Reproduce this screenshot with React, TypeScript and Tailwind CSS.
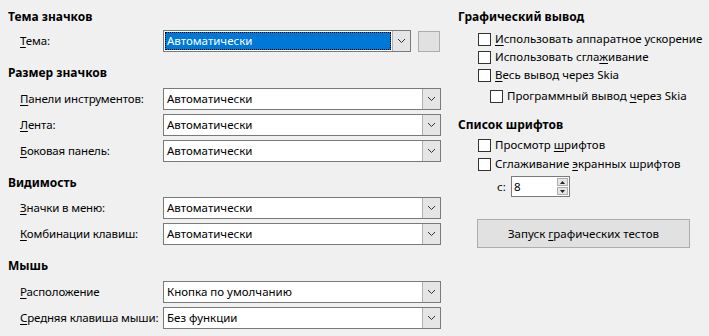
import React from 'react';

const font = { fontFamily: '"Noto Sans", "Open Sans", sans-serif' };

function U({ children }: { children: React.ReactNode }) {
  return <span className="underline underline-offset-2">{children}</span>;
}

function Chevron() {
  return (
    <svg width="9" height="6" viewBox="0 0 9 6" className="text-[#333]">
      <path d="M1 1l3.5 3.5L8 1" fill="none" stroke="currentColor" strokeWidth="1" />
    </svg>
  );
}

function Select({ value, focused }: { value: string; focused?: boolean }) {
  return (
    <div
      className={`flex shrink-0 h-[22px] border border-[#7a7a7a] bg-white ${focused ? 'w-[248px]' : 'w-[278px]'}`}
    >
      <div className="flex-1 p-[1px]">
        <div
          className={`h-full flex items-center pl-[2px] whitespace-nowrap ${
            focused ? 'bg-[#0078d7] text-white outline-1 outline-dotted outline-black -outline-offset-1' : 'text-black'
          }`}
        >
          {value}
        </div>
      </div>
      <div className="w-[18px] flex items-center justify-center bg-[#e5e5e5] border-l border-[#b0b0b0]">
        <Chevron />
      </div>
    </div>
  );
}

function Row({ label, value, focused }: { label: React.ReactNode; value: string; focused?: boolean }) {
  return (
    <div className="flex items-center h-[22px]">
      <div className="w-[155px] shrink-0 pl-[12px] whitespace-nowrap tracking-[-0.15px]">{label}</div>
      <Select value={value} focused={focused} />
      {focused && <div className="ml-[7px] shrink-0 w-[22px] h-[21px] bg-[#e1e1e1] border border-[#adadad]" />}
    </div>
  );
}

function Heading({ children }: { children: React.ReactNode }) {
  return <div className="h-4 leading-4 text-[12px] font-bold whitespace-nowrap">{children}</div>;
}

function Check({ children, indent }: { children: React.ReactNode; indent?: boolean }) {
  return (
    <div className={`flex items-center h-[18px] ${indent ? 'pl-[32px]' : 'pl-[20px]'}`}>
      <div className="shrink-0 w-[13px] h-[13px] border border-[#333] bg-white" />
      <span className="ml-[4px] whitespace-nowrap">{children}</span>
    </div>
  );
}

export default function App() {
  return (
    <div className="w-[709px] h-[336px] bg-[#f0f0f0] text-black text-[11.5px] flex overflow-hidden" style={font}>
      <div className="w-[450px] shrink-0 pl-[8px] pt-[9px] flex flex-col">
        <Heading>Тема значков</Heading>
        <div className="mt-[5px]">
          <Row label={<><U>Т</U>ема:</>} value="Автоматически" focused />
        </div>
        <div className="mt-[13px]">
          <Heading>Размер значков</Heading>
        </div>
        <div className="mt-[7px] flex flex-col gap-[4px]">
          <Row label={<><U>П</U>анели инструментов:</>} value="Автоматически" />
          <Row label={<><U>Л</U>ента:</>} value="Автоматически" />
          <Row label={<><U>Б</U>оковая панель:</>} value="Автоматически" />
        </div>
        <div className="mt-[13px]">
          <Heading>Видимость</Heading>
        </div>
        <div className="mt-[6px] flex flex-col gap-[4px]">
          <Row label={<><U>З</U>начки в меню:</>} value="Автоматически" />
          <Row label={<><U>К</U>омбинации клавиш:</>} value="Автоматически" />
        </div>
        <div className="mt-[13px]">
          <Heading>Мышь</Heading>
        </div>
        <div className="mt-[7px] flex flex-col gap-[4px]">
          <Row label={<><U>Р</U>асположение</>} value="Кнопка по умолчанию" />
          <Row label={<><U>С</U>редняя клавиша мыши:</>} value="Без функции" />
        </div>
      </div>

      <div className="flex-1 pl-[8px] pt-[9px] flex flex-col">
        <Heading>Графический вывод</Heading>
        <div className="mt-[5px] flex flex-col">
          <Check><U>И</U>спользовать аппаратное ускорение</Check>
          <Check>Использовать сгла<U>ж</U>ивание</Check>
          <Check><U>В</U>есь вывод через Skia</Check>
          <div className="mt-[3px]">
            <Check indent>Программный вывод <U>ч</U>ерез Skia</Check>
          </div>
        </div>
        <div className="mt-[12px]">
          <Heading>Список шрифтов</Heading>
        </div>
        <div className="mt-[3px] flex flex-col gap-[1px]">
          <Check>Просмотр <U>ш</U>рифтов</Check>
          <Check>Сглаживание <U>э</U>кранных шрифтов</Check>
        </div>
        <div className="mt-[3px] flex items-center pl-[39px]">
          <span className="w-[14px]">с:</span>
          <div className="w-[59px] h-[21px] border border-[#7a7a7a] bg-white flex">
            <div className="flex-1 pl-[2px] leading-[19px]">8</div>
            <div className="w-[13px] flex flex-col p-[1px] gap-[1px]">
              <div className="flex-1 bg-[#e5e5e5] border border-[#adadad] flex items-center justify-center">
                <svg width="5" height="3" viewBox="0 0 5 3"><path d="M2.5 0L5 3H0z" fill="#222" /></svg>
              </div>
              <div className="flex-1 bg-[#e5e5e5] border border-[#adadad] flex items-center justify-center">
                <svg width="5" height="3" viewBox="0 0 5 3"><path d="M0 0h5L2.5 3z" fill="#222" /></svg>
              </div>
            </div>
          </div>
        </div>
        <div className="mt-[22px] ml-[19px] w-[213px] h-[29px] bg-[#e1e1e1] border border-[#adadad] flex items-center justify-center">
          <span>Запуск <U>г</U>рафических тестов</span>
        </div>
      </div>
    </div>
  );
}
